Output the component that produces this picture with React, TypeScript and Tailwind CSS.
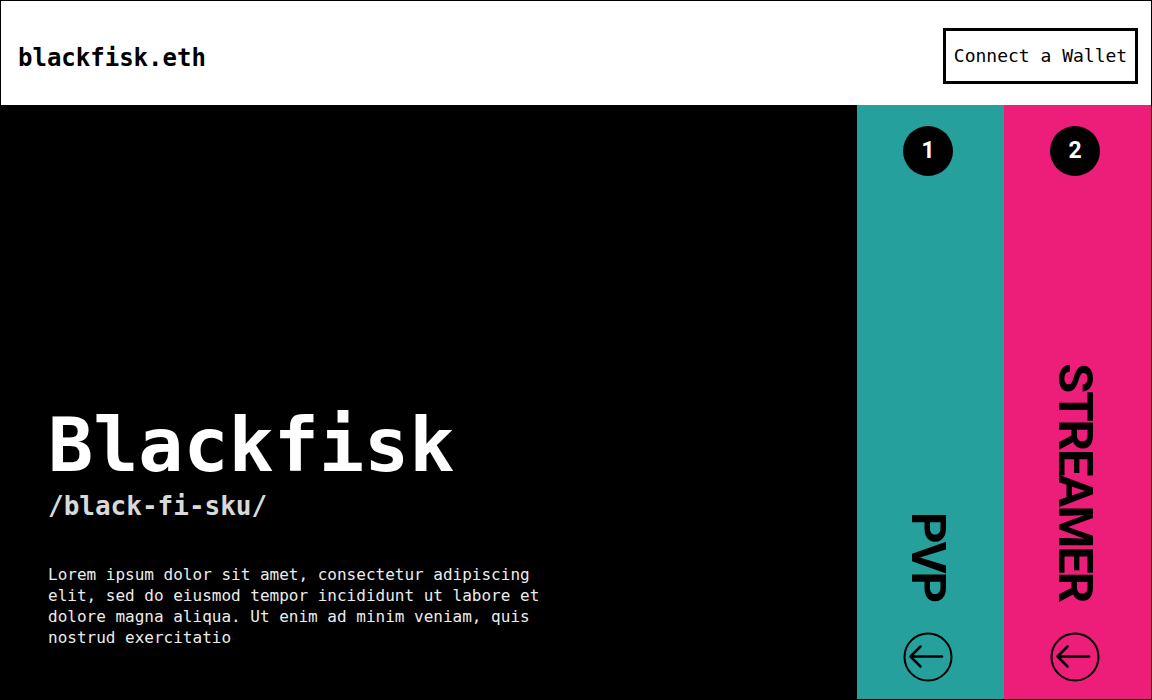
import React from "react";

const mono = { fontFamily: '"DejaVu Sans Mono", "Liberation Mono", monospace' };

function ArrowCircle() {
  return (
    <svg width="50" height="50" viewBox="0 0 50 50" fill="none" stroke="black" strokeWidth="2.5" strokeLinecap="round" strokeLinejoin="round">
      <circle cx="25" cy="25" r="23.5" strokeWidth="2" />
      <line x1="8" y1="24.5" x2="39" y2="24.5" />
      <polyline points="17.5,14.5 7.5,24.5 17.5,34.5" />
    </svg>
  );
}

function Column({ n, label, bg }: { n: string; label: string; bg: string }) {
  return (
    <div className={`w-[147px] h-full flex flex-col items-center pt-[21px] pb-[17px] ${bg}`}>
      <div className="w-[50px] h-[50px] rounded-full bg-black text-white flex items-center justify-center text-[23px] font-bold font-['Roboto',sans-serif] -ml-[5px]">
        {n}
      </div>
      <div className="flex-1 flex items-end justify-center -ml-[5px]">
        <span className="[writing-mode:vertical-rl] font-['Roboto',sans-serif] font-bold text-[49px] leading-none text-black tracking-[-2px]">
          {label}
        </span>
      </div>
      <div className="mt-[31px] -ml-[5px]">
        <ArrowCircle />
      </div>
    </div>
  );
}

export default function App() {
  return (
    <div className="w-[1152px] h-[700px] border border-black flex flex-col bg-white overflow-hidden">
      <header className="h-[104px] flex items-center justify-between pl-[17px] pr-[13px] pt-[7px] shrink-0">
        <div className="text-[24px] font-bold text-black pt-[2px]" style={mono}>
          blackfisk.eth
        </div>
        <button className="w-[195px] h-[56px] border-[3px] border-black flex items-center justify-center text-[18px] text-black -mt-[2px]" style={mono}>
          Connect a Wallet
        </button>
      </header>
      <main className="flex-1 flex min-h-0">
        <section className="flex-1 bg-black flex flex-col justify-end pl-[47px] pb-[51px]" style={mono}>
          <h1 className="text-[75px] font-bold text-white leading-none">Blackfisk</h1>
          <div className="text-[26px] font-bold text-[#d9d9d9] mt-[10px] leading-none">/black-fi-sku/</div>
          <p className="text-[16px] text-[#ececec] leading-[21px] mt-[45px] w-[500px]">
            Lorem ipsum dolor sit amet, consectetur adipiscing elit, sed do eiusmod tempor incididunt ut labore et dolore magna aliqua. Ut enim ad minim veniam, quis nostrud exercitatio
          </p>
        </section>
        <Column n="1" label="PVP" bg="bg-[#26a09c]" />
        <Column n="2" label="STREAMER" bg="bg-[#ed1e79]" />
      </main>
    </div>
  );
}
